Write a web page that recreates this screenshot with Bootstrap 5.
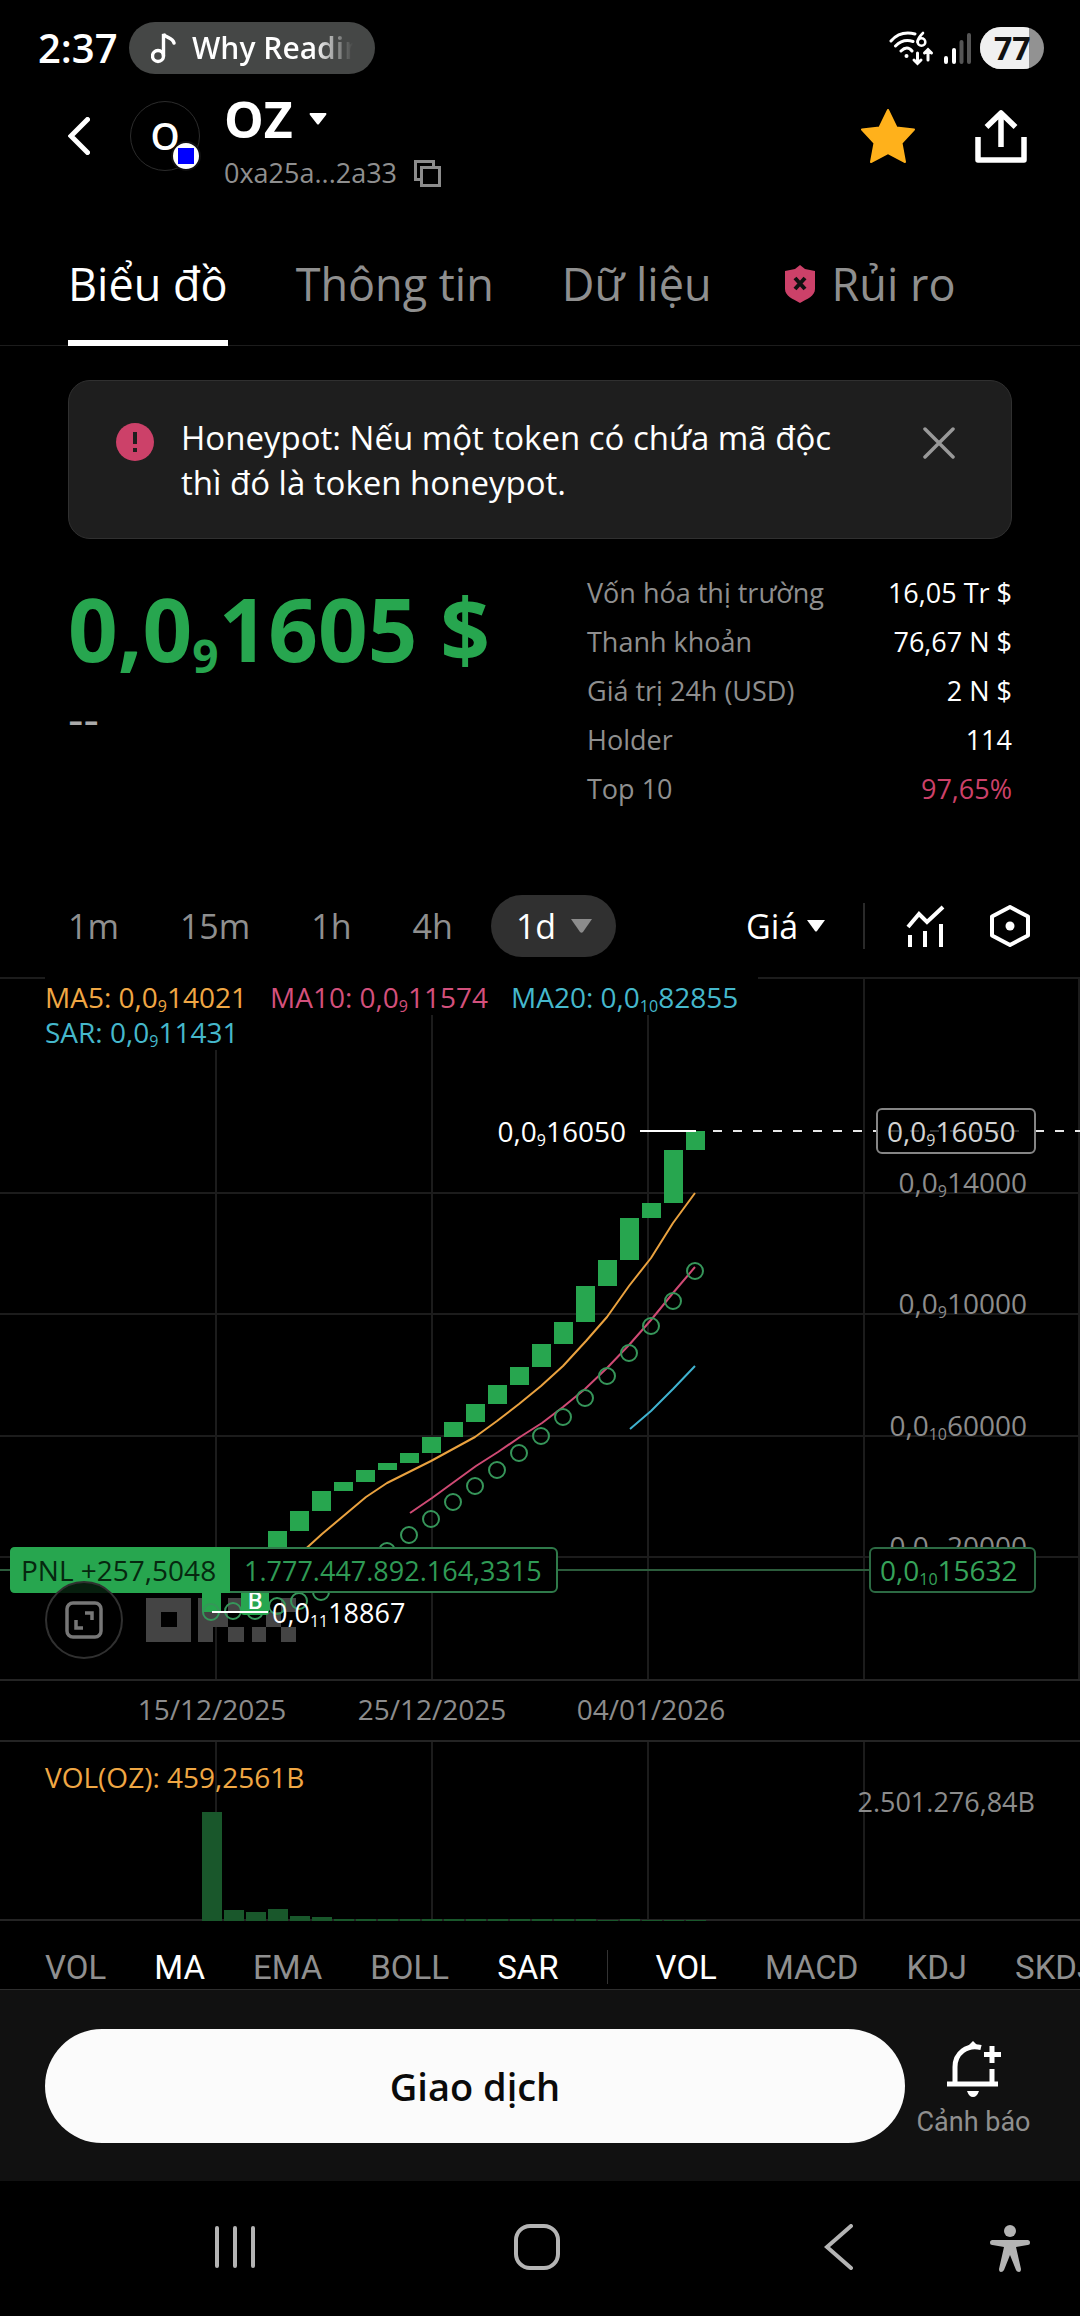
<!doctype html>
<html lang="vi" data-bs-theme="dark">
<head>
<meta charset="utf-8">
<meta name="viewport" content="width=device-width, initial-scale=1">
<title>OZ – Biểu đồ</title>
<link href="https://cdn.jsdelivr.net/npm/bootstrap@5.3.0/dist/css/bootstrap.min.css" rel="stylesheet">
<style>
:root{--up:#27a64f;--risk:#cc4169;--dim:#8f8f8f;--line:#1c1c1c}
body{background:#000;color:#fff;font-family:"Open Sans","Noto Sans",sans-serif;font-size:27px;line-height:36px}
button,select{background:none;border:0;color:inherit;padding:0}
svg{display:block;flex:none}
.dim{color:var(--dim)}
.side{padding-left:68px;padding-right:68px}
.statusbar{height:89px;padding:22px 36px 0 38px;align-items:flex-start}
.statusbar .clock{font-size:40px;font-weight:600;line-height:52px;width:91px}
.pill-music{height:52px;width:246px;border-radius:26px;background:#454746;padding-left:22px;font-size:30px;font-weight:600;overflow:hidden}
.pill-music span{width:161px;overflow:hidden;white-space:nowrap;background:linear-gradient(90deg,#fff 76%,#454746 100%);-webkit-background-clip:text;background-clip:text;color:transparent}
.sysicons{height:52px}
.head{padding-left:68px;padding-right:53px}
.tool{height:94px;display:flex;align-items:center}
.tool.share{margin-left:60px}
.avatar{width:70px;height:70px;border:1px solid #2c2c2c;font-size:37px;font-weight:600;margin-left:40px}
.chain{position:absolute;right:-2px;bottom:-1px;width:30px;height:30px;background:#fff;border:2px solid #111;padding:5px}
.chain i{display:block;width:16px;height:16px;background:#00f}
.coin{font-size:50px;font-weight:700;line-height:60px}
.addr{line-height:48px;gap:17px}
.tabs{margin-top:57px;gap:68px;border-bottom:1px solid var(--line);font-size:45px;line-height:60px;flex-wrap:nowrap}
.tabs a{color:var(--dim);text-decoration:none;padding-bottom:26px;border-bottom:6px solid transparent;margin-bottom:-1px;white-space:nowrap}
.tabs a.on{color:#fff;border-color:#fff}
.notice{margin-top:34px;background:#1e1e1e;border:1px solid #303030;border-radius:22px;padding:34px 56px 33px 47px;font-size:33px;line-height:45px}
.notice .dot{width:38px;margin:8px 27px 0 0}
.price{font-size:87px;font-weight:700;line-height:100px;color:var(--up);margin-top:10px}
.price small{font-size:46px;line-height:0;position:relative;top:11px}
.change{font-size:48px;line-height:40px;margin-top:20px;color:#aaa}
.quote{margin-top:29px}
.stats{width:425px;margin:0}
.stats div{line-height:49px}
.stats dt{font-weight:400;color:var(--dim)}
.stats dd{margin:0}
.stats .bad{color:var(--risk)}
.frames{margin-top:82px;height:62px;padding:0 50px 0 68px;font-size:34px}
.frames .span{gap:61px}
.frames select{appearance:none;-webkit-appearance:none;line-height:46px;outline:0}
.frames select option{background:#222}
.picked{background:#303030;border-radius:31px;height:62px;padding:0 24px 0 25px;margin-left:38px;gap:14px}
.rule{width:2px;background:#2a2a2a}
.plot{margin-top:20px;position:relative}
.plot>svg{width:100%;height:auto}
.legend{position:absolute;left:45px;top:0;line-height:35px;font-size:28px;padding-top:3px}
.legend div{background:#000;width:fit-content;gap:23px}
.legend div:first-child{padding-right:20px;margin-top:-3px;padding-top:3px}
.legend small{font-size:16px;line-height:0;position:relative;top:4px}
.c5{color:#f0a744}.c10{color:#d3507c}.c20{color:#45b8cc}
.full{position:absolute;left:45px;top:604px;width:78px;height:78px;border:2px solid #303030;border-radius:50%;background:rgba(0,0,0,.82)}
.inds{padding:25px 0 0 45px;height:68px;font:400 33px/43px Roboto,sans-serif;gap:48px;overflow:hidden;white-space:nowrap}
.inds button{color:var(--dim);flex:none}
.inds button.on{color:#fff}
.inds .rule{width:1px;flex:none;height:34px;margin-top:4px;background:#333}
.actions{background:#111;border-top:1px solid #2e2e2e;padding:39px 49px 38px 45px;gap:11px}
.trade{height:114px;border-radius:57px;background:#fbfbfb;color:#0a0a0a;font-size:38px;font-weight:600}
.bell{width:115px;height:114px;font:400 27px/34px Roboto,sans-serif;padding-top:12px;white-space:nowrap}
.sysnav{height:135px;padding:0 50px 4px 84px}
.sysnav button{flex:1;display:flex;justify-content:center}
.sysnav button:last-child{flex:none}
svg text{font-family:"Open Sans","Noto Sans",sans-serif;font-size:28px}
svg .lo{font-size:16px}
svg .amount{font-size:27px}
</style>
</head>
<body>
<div class="statusbar d-flex">
  <span class="clock">2:37</span>
  <div class="pill-music d-flex align-items-center">
    <svg width="25" height="32" viewBox="0 0 25 32" fill="none" stroke="#fff" stroke-width="3.4" stroke-linecap="round"><circle cx="7" cy="24" r="5.5"/><path d="M12.5 24V2c2 4 9 3 10.500 9"/></svg>
    <span class="ms-3">Why Readin</span>
  </div>
  <div class="sysicons d-flex align-items-center ms-auto">
    <svg width="45" height="36" viewBox="0 0 45 36" fill="none" stroke="#fff" stroke-width="3" stroke-linecap="round"><path d="M2 11C9 3 18 2 26 4M6.500 16C12 10.500 18 9.500 24 11.500M12 21c4-4 8-4 11 0"/><circle cx="17.500" cy="26" r="2" fill="#fff" stroke="none"/><path d="M34 3C30 7 28.500 9 28.500 12" stroke-width="2.600"/><circle cx="32.500" cy="12" r="3.800" stroke-width="2.600"/><path d="M28.500 23v10M25 30l3.500 3.500L32 30M39 30V20M35.500 23l3.500-3.500 3.500 3.500"/></svg>
    <svg class="ms-2" width="30" height="32" viewBox="0 0 30 32" stroke-width="4" stroke-linecap="round"><path stroke="#fff" d="M4 26v4M12 18v12"/><path stroke="#555" d="M19.500 10v20M27 3v27"/></svg>
    <svg class="ms-2" width="64" height="42" viewBox="0 0 64 42"><defs><clipPath id="cell"><rect width="64" height="42" rx="21"/></clipPath></defs><g clip-path="url(#cell)"><rect width="64" height="42" fill="#929292"/><rect width="49" height="42" fill="#f0f0f0"/></g><text x="14" y="33" style="font-size:32px;font-weight:700" fill="#111">77</text></svg>
  </div>
</div>

<header class="head d-flex align-items-start">
  <button class="tool" aria-label="Quay lại"><svg width="22" height="38" viewBox="0 0 22 38" fill="none" stroke="#fff" stroke-width="5" stroke-linecap="round"><path d="M19.500 2.500L3 19l16.500 16.500"/></svg></button>
  <div class="tool"><div class="avatar rounded-circle position-relative d-flex align-items-center justify-content-center"><span>O</span><span class="chain rounded-circle"><i></i></span></div></div>
  <div class="ms-4">
    <button class="coin d-flex align-items-center">OZ<svg class="ms-3" width="18" height="12"><path d="M1 0h16q1 1 0 2L10 11q-1 1-2 0L1 2q-1-1 0-2" fill="#fff"/></svg></button>
    <div class="addr dim d-flex align-items-center">0xa25a...2a33<button aria-label="Sao chép"><svg width="27" height="27" fill="none" stroke="#8c8c8c" stroke-width="3"><path d="M6 19.500H1.500V1.500h18V6M7.500 7.500h18v18h-18z"/></svg></button></div>
  </div>
  <button class="tool ms-auto" aria-label="Yêu thích"><svg width="54" height="54" viewBox="0 0 54 54" fill="#ffb11b" stroke="#ffb11b" stroke-width="2" stroke-linejoin="round"><path d="M27 1l8.500 17.500L53 20.500 40.500 34 44 53 27 44 10 53 13.500 34 1 20.500 18.500 18.500z"/></svg></button>
  <button class="tool share" aria-label="Chia sẻ"><svg width="52" height="54" viewBox="0 0 52 54" fill="none" stroke="#fff" stroke-width="5.500" stroke-linejoin="round"><path d="M3 28v23h46V28M26 38V4M11.500 18L26 4l14.500 14"/></svg></button>
</header>

<nav class="tabs side d-flex mb-0">
  <a class="on" href="#">Biểu đồ</a>
  <a href="#">Thông tin</a>
  <a href="#">Dữ liệu</a>
  <a class="d-flex align-items-center ms-1" href="#"><svg class="me-3" width="32" height="38" viewBox="0 0 32 38"><path d="M16 0l5 4 10 2v18c0 7-8 10-15 14C9 34 1 31 1 24V6l10-2z" fill="#cc4169"/><path d="M11 13l10 11M21 13L11 24" stroke="#111" stroke-width="4"/></svg>Rủi ro</a>
</nav>

<main>
<div class="side">
  <div class="notice d-flex align-items-start" role="alert">
    <svg class="dot" width="38" height="38"><circle cx="19" cy="19" r="19" fill="#cc4169"/><path d="M19 9v12M19 25v4" stroke="#1e1e1e" stroke-width="4"/></svg>
    <div class="flex-grow-1">Honeypot: Nếu một token có chứa mã độc<br>thì đó là token honeypot.</div>
    <button class="mt-2 pt-1" aria-label="Đóng"><svg width="32" height="32" stroke="#999" stroke-width="3.500" stroke-linecap="round"><path d="M2 2l28 28M30 2L2 30"/></svg></button>
  </div>
  <section class="quote d-flex justify-content-between">
    <div>
      <div class="price text-nowrap">0,0<small>9</small>1605 $</div>
      <div class="change">--</div>
    </div>
    <dl class="stats">
      <div class="d-flex justify-content-between"><dt>Vốn hóa thị trường</dt><dd>16,05 Tr $</dd></div>
      <div class="d-flex justify-content-between"><dt>Thanh khoản</dt><dd>76,67 N $</dd></div>
      <div class="d-flex justify-content-between"><dt>Giá trị 24h (USD)</dt><dd>2 N $</dd></div>
      <div class="d-flex justify-content-between"><dt>Holder</dt><dd>114</dd></div>
      <div class="d-flex justify-content-between"><dt>Top 10</dt><dd class="bad">97,65%</dd></div>
    </dl>
  </section>
</div>

<div class="frames d-flex align-items-center">
  <div class="span d-flex dim"><button>1m</button><button>15m</button><button>1h</button><button>4h</button></div>
  <label class="picked d-flex align-items-center"><select aria-label="Khung thời gian"><option>1d</option></select><svg width="21" height="14"><path d="M0 0h21L12 13q-1.500 1.500-3 0z" fill="#8c8c8c"/></svg></label>
  <label class="ms-auto d-flex align-items-center gap-2"><select aria-label="Loại giá"><option>Giá</option></select><svg width="18" height="12"><path d="M0 0h18l-8 11q-1 1-2 0z" fill="#fff"/></svg></label>
  <span class="rule" style="height:46px;margin:0 41px 0 38px"></span>
  <button aria-label="Chỉ báo"><svg width="39" height="42" fill="none" stroke="#fff" stroke-width="4"><path d="M2 22L13 9l8 8L37 2M4 30v12M19 26v16M35 19v23"/></svg></button>
  <button style="margin-left:45px" aria-label="Cài đặt"><svg width="40" height="42" viewBox="0 0 40 42" fill="none" stroke="#fff" stroke-width="4" stroke-linejoin="round"><path d="M20 2l18 9.500v19L20 40 2 30.500v-19z"/><circle cx="20" cy="21" r="4.500" fill="#fff" stroke="none"/></svg></button>
</div>

<section class="plot">
  <svg viewBox="0 977 1080 944" aria-label="Biểu đồ nến OZ">
    <g stroke="#1c1c1c" stroke-width="2">
      <path d="M0 978H1080M0 1193H1080M0 1314H1080M0 1436H1080M0 1557H1080"/>
      <path d="M216 978V1680M432 978V1680M648 978V1680M864 978V1680M1079 978V1680M216 1741V1920M432 1741V1920M648 1741V1920M864 1741V1920"/>
      <path d="M0 1680H1080M0 1741H1080M0 1920H1080" stroke="#242424"/>
    </g>
    <path fill="#444" fill-rule="evenodd" d="M146 1598h45v44h-45zM161 1612v15h16v-15zM198 1598h15v14h15v15h-15v15h-15zM228 1598h16v14h-16zM228 1627h16v15h-16zM252 1598h14v14h-14zM266 1612h15v15h-15zM281 1598h15v14h-15zM252 1627h14v15h-14zM281 1627h15v15h-15z"/>
    <g id="candles" fill="#27a64f"></g>
    <g fill="none" stroke-width="2" stroke-linejoin="round">
      <path stroke="#eaa23f" d="M300 1554L322 1534 366 1497 387 1483 409 1472 431 1461 453 1449 475 1437 497 1421 519 1404 541 1386 563 1366 586 1341 607 1317 629 1286 651 1258 673 1223 695 1193"/>
      <path stroke="#cf4a74" d="M410 1513L432 1498 454 1482 476 1466 498 1452 520 1437 542 1423 563 1407 585 1389 607 1368 629 1345 651 1320 673 1293 695 1267"/>
      <path stroke="#3fb2cf" d="M630 1429L651 1411 673 1389 695 1366"/>
    </g>
    <g id="sar" fill="none" stroke="#36965a" stroke-width="2"></g>
    <g fill="#8c8c8c" text-anchor="end">
      <text x="1027" y="1193">0,0<tspan class="lo" dy="4">9</tspan><tspan dy="-4">14000</tspan></text>
      <text x="1027" y="1314">0,0<tspan class="lo" dy="4">9</tspan><tspan dy="-4">10000</tspan></text>
      <text x="1027" y="1436">0,0<tspan class="lo" dy="4">10</tspan><tspan dy="-4">60000</tspan></text>
      <text x="1027" y="1557">0,0<tspan class="lo" dy="4">10</tspan><tspan dy="-4">20000</tspan></text>
    </g>
    <path d="M0 1570H869" stroke="#2c5c3c" stroke-width="2"/>
    <rect x="870" y="1548" width="165" height="44" rx="5" fill="#000" stroke="#2c6a43" stroke-width="2"/>
    <text x="880" y="1581" fill="#36a35a">0,0<tspan class="lo" dy="4">10</tspan><tspan dy="-4">15632</tspan></text>
    <rect x="241" y="1588" width="28" height="27" rx="3" fill="#27a64f"/>
    <text x="255" y="1609" fill="#fff" text-anchor="middle" style="font-size:23px;font-weight:600">B</text>
    <rect x="11" y="1548" width="546" height="44" rx="5" fill="#000" stroke="#2f7a4a" stroke-width="2"/>
    <path d="M230 1547V1593H15q-5 0-5-5V1552q0-5 5-5z" fill="#27a64f"/>
    <text x="21" y="1581" fill="#06280f">PNL +257,5048</text>
    <text class="amount" x="244" y="1581" fill="#2f9a55">1.777.447.892.164,3315</text>
    <path d="M212 1612H268M640 1131H696" stroke="#fff" stroke-width="2"/>
    <text class="amount" x="272" y="1623" fill="#fff">0,0<tspan class="lo" dy="4">11</tspan><tspan dy="-4">18867</tspan></text>
    <text x="626" y="1142" fill="#fff" text-anchor="end">0,0<tspan class="lo" dy="4">9</tspan><tspan dy="-4">16050</tspan></text>
    <path d="M713 1131H877M1035 1131H1080" stroke="#e6e6e6" stroke-width="2" stroke-dasharray="9 11"/>
    <rect x="877" y="1109" width="158" height="44" rx="5" fill="#000" stroke="#858585" stroke-width="2"/>
    <path d="M890 1131H1030" stroke="#333" stroke-width="2" stroke-dasharray="9 11"/>
    <text x="887" y="1142" fill="#d2d2d2">0,0<tspan class="lo" dy="4">9</tspan><tspan dy="-4">16050</tspan></text>
    <g fill="#8c8c8c" text-anchor="middle">
      <text x="212" y="1720">15/12/2025</text><text x="432" y="1720">25/12/2025</text><text x="651" y="1720">04/01/2026</text>
    </g>
    <text x="45" y="1788" fill="#f0a744">VOL(OZ): 459,2561B</text>
    <text class="amount" x="1035" y="1812" fill="#8c8c8c" text-anchor="end">2.501.276,84B</text>
    <g id="volume" fill="#19572b"></g>
  </svg>
  <div class="legend">
    <div class="d-flex"><span class="c5">MA5: 0,0<small>9</small>14021</span><span class="c10">MA10: 0,0<small>9</small>11574</span><span class="c20">MA20: 0,0<small>10</small>82855</span></div>
    <div class="c20">SAR: 0,0<small>9</small>11431</div>
  </div>
  <button class="full d-flex align-items-center justify-content-center" aria-label="Toàn màn hình"><svg width="38" height="38" fill="none" stroke="#777" stroke-width="3.500"><rect x="2" y="2" width="34" height="34" rx="6"/><path d="M20 12h7v7M11 19v8h7"/></svg></button>
</section>

<div class="inds d-flex">
  <button>VOL</button><button class="on">MA</button><button>EMA</button><button>BOLL</button><button class="on">SAR</button>
  <span class="rule"></span>
  <button class="on">VOL</button><button>MACD</button><button>KDJ</button><button>SKDJ</button>
</div>
</main>

<footer>
  <div class="actions d-flex">
    <button class="trade flex-grow-1">Giao dịch</button>
    <button class="bell dim d-flex flex-column align-items-center justify-content-start">
      <svg class="mb-2" width="54" height="56" viewBox="0 0 54 56" fill="none" stroke="#fff" stroke-width="5"><path d="M34 6.500C20 3 8 12 8 26v16M0 43h51M45 42V28"/><path d="M21 5l5-5 5 5z" fill="#fff" stroke="none"/><path d="M45 5v17M37 13.500h17"/><path d="M20 50h12q-2 6-6 6t-6-6" fill="#fff" stroke="none"/></svg>
      Cảnh báo
    </button>
  </div>
  <div class="sysnav d-flex align-items-center">
    <button aria-label="Gần đây"><svg width="42" height="44" stroke="#b4b4b4" stroke-width="4" stroke-linecap="round"><path d="M3 3v38M21 3v38M39 3v38"/></svg></button>
    <button aria-label="Trang chủ"><svg width="46" height="46" fill="none" stroke="#b4b4b4" stroke-width="4"><rect x="2" y="2" width="42" height="42" rx="14"/></svg></button>
    <button aria-label="Trở về"><svg width="30" height="46" fill="none" stroke="#b4b4b4" stroke-width="4" stroke-linecap="round"><path d="M27 2L3 23l24 21"/></svg></button>
    <button aria-label="Trợ năng"><svg class="mt-1" width="40" height="48" viewBox="0 0 40 48" fill="#b4b4b4"><circle cx="20" cy="6" r="6"/><path d="M2.500 15h35q2.500 0 2.500 2.500t-2.500 2.500L26 22l5 22q0 3-2 3t-3-2L20 30l-6 15q-1 2-3 2t-2-3l5-22-11.500-2Q0 20 0 17.500T2.500 15z"/></svg></button>
  </div>
</footer>

<script>
// Candle tops and bottoms, one day per 22px step.
const candles = [[1575,1612],null,null,[1531,1551],[1511,1531],[1491,1511],[1482,1491],[1470,1482],[1463,1470],[1453,1463],[1437,1453],[1422,1437],[1404,1422],[1385,1404],[1367,1385],[1344,1367],[1322,1344],[1286,1322],[1260,1286],[1218,1260],[1203,1218],[1150,1203],[1131,1150]];
const sar = [1612,1611,1611,1606,1601,1592,1577,1565,1551,1535,1519,1502,1486,1470,1453,1436,1417,1398,1376,1353,1326,1301,1271];
const volume = [109,11,9,12,5,4,2,2,2,2,2,2,2,2,2,2,2,2,1,2,1,1,1];
document.getElementById('candles').innerHTML = candles.map((c, i) => c ? `<rect x="${202 + 22 * i}" y="${c[0]}" width="19" height="${c[1] - c[0]}"/>` : '').join('');
document.getElementById('sar').innerHTML = sar.map((y, i) => `<circle cx="${211 + 22 * i}" cy="${y}" r="8"/>`).join('');
document.getElementById('volume').innerHTML = volume.map((h, i) => `<rect x="${202 + 22 * i}" y="${1921 - h}" width="20" height="${h}"/>`).join('');
</script>
<script src="https://cdn.jsdelivr.net/npm/bootstrap@5.3.0/dist/js/bootstrap.bundle.min.js"></script>
</body>
</html>
